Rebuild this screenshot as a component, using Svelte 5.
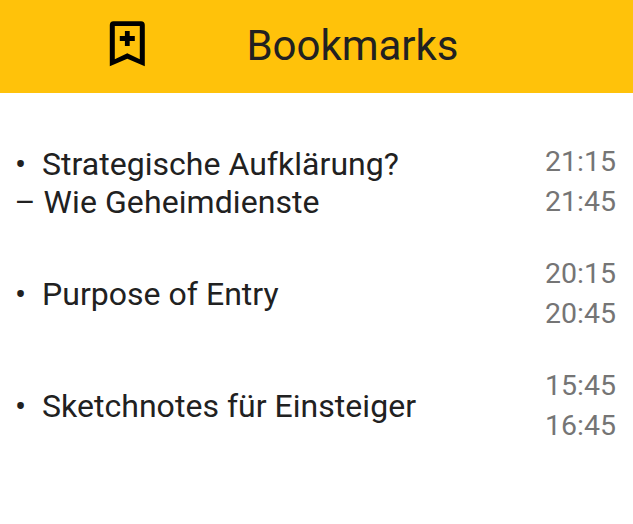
<script>
  const bookmarks = [
    { lines: ['Strategische Aufklärung?', '– Wie Geheimdienste'], start: '21:15', end: '21:45' },
    { lines: ['Purpose of Entry'], start: '20:15', end: '20:45' },
    { lines: ['Sketchnotes für Einsteiger'], start: '15:45', end: '16:45' }
  ];
</script>

<main>
  <header>
    <svg class="icon" viewBox="0 0 38 48" width="38" height="48" aria-hidden="true">
      <path fill-rule="evenodd" d="M5.5 1.2H33Q36.8 1.2 36.8 5V46.3L19.3 38.8L1.8 46.3V5Q1.8 1.2 5.5 1.2ZM6.8 6V39.2L19.3 33.3L31.8 39.2V6Z" />
      <path d="M19.3 11V26M11.8 18.5H26.8" stroke="#000" stroke-width="4.8" />
    </svg>
    <h1>Bookmarks</h1>
  </header>
  <ul>
    {#each bookmarks as item}
      <li>
        <div class="title" class:multi={item.lines.length > 1}>
          {#each item.lines as line, i}
            <div class="line" class:continued={i > 0}>{#if i === 0}<span class="bullet">•</span>{/if}<span>{line}</span></div>
          {/each}
        </div>
        <div class="times">
          <time>{item.start}</time>
          <time>{item.end}</time>
        </div>
      </li>
    {/each}
  </ul>
</main>

<style>
  :global(body) { margin: 0; background: #fff; }
  main { height: 524px; overflow: hidden; background: #fff; font-family: Roboto, sans-serif; color: #212121; }
  header { display: flex; align-items: center; box-sizing: border-box; height: 93px; padding-bottom: 5px; background: #ffc20a; }
  .icon { display: block; margin-left: 108px; filter: blur(0.6px); }
  h1 { margin: 3px 0 0 100.5px; font-size: 42px; font-weight: 400; line-height: 50px; letter-spacing: -0.05px; }
  ul { list-style: none; margin: 0; padding: 33px 17px 0 16px; }
  li { display: flex; align-items: center; justify-content: space-between; height: 112px; }
  .multi { padding-top: 2px; }
  .line { display: flex; height: 38px; line-height: 38px; font-size: 32px; letter-spacing: 0.03px; white-space: pre; }
  .continued { margin-left: -1.5px; letter-spacing: 0.08px; }
  .bullet { width: 26px; margin-left: -1px; margin-right: 1px; font-size: 33px; line-height: 40px; }
  .times { text-align: right; color: #757575; font-size: 28.5px; }
  time { display: block; line-height: 40px; }
</style>
